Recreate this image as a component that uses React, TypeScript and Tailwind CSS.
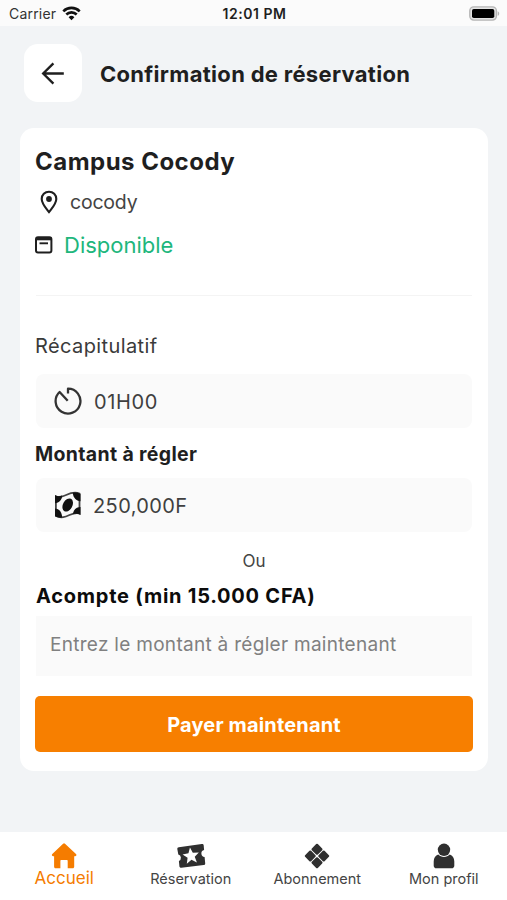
import type { ReactNode } from 'react'

function WifiIcon() {
  return (
    <svg width="19" height="15" viewBox="0 0 19 15" fill="none" stroke="#111" strokeWidth="2.6">
      <path d="M1.3 5.3a11.6 11.6 0 0 1 16.4 0" />
      <path d="M4.3 8.5a7.4 7.4 0 0 1 10.4 0" />
      <path d="M9.5 14.2 6.6 11.3a4.1 4.1 0 0 1 5.8 0Z" fill="#111" stroke="none" />
    </svg>
  )
}

function BatteryIcon() {
  return (
    <svg width="31" height="15" viewBox="0 0 31 15">
      <rect x="0.8" y="0.9" width="26.6" height="13.2" rx="4" fill="#e4e4e4" stroke="#b5b5b5" strokeWidth="1.4" />
      <rect x="3" y="3" width="22.3" height="9" rx="1.8" fill="#000" />
      <path d="M28.7 5.2c2 .8 2 3.8 0 4.6Z" fill="#b5b5b5" />
    </svg>
  )
}

function ArrowLeftIcon() {
  return (
    <svg width="24" height="24" viewBox="0 0 24 24" fill="none" stroke="#1f1f1f" strokeWidth="2.4">
      <path d="M22.8 12.5H2.4M12.4 2.3 2.2 12.5l10.2 10.2" />
    </svg>
  )
}

function PinIcon() {
  return (
    <svg width="18" height="24" viewBox="0 0 18 24">
      <path
        d="M9 1.7c4.2 0 7.3 3.1 7.3 7.2 0 4.7-4.4 9.4-7.3 13.2C6.1 18.3 1.7 13.6 1.7 8.9 1.7 4.8 4.8 1.7 9 1.7Z"
        fill="none"
        stroke="#1f1f1f"
        strokeWidth="2.1"
      />
      <circle cx="9" cy="9" r="2.9" fill="#1f1f1f" />
    </svg>
  )
}

function CalendarIcon() {
  return (
    <svg width="18" height="18" viewBox="0 0 18 18">
      <rect x="1" y="1.3" width="15.4" height="15.2" rx="2" fill="none" stroke="#1f1f1f" strokeWidth="2" />
      <path d="M1 2.7h15.4" stroke="#1f1f1f" strokeWidth="3.2" />
      <path d="M4.5 7.3H13" stroke="#1f1f1f" strokeWidth="1.9" />
    </svg>
  )
}

function TimerIcon() {
  return (
    <svg width="28" height="28" viewBox="0 0 28 28" fill="none" stroke="#333" strokeWidth="2.3">
      <path d="M14 6.6V1.7A12.4 12.4 0 1 1 5.6 5L13.7 13.8" strokeLinejoin="round" />
    </svg>
  )
}

function CashIcon() {
  return (
    <svg width="28" height="28" viewBox="0 0 28 28">
      <path
        d="M1.9 5.4c8 3.6 13-7 23.6-2.9v20C17.5 19.5 12 30 1.9 25Z"
        fill="#fafafa"
        stroke="#444"
        strokeWidth="1.8"
      />
      <path d="M1 4.2c2.5 1.4 5 1.2 7.3.1-.1 4.3-3.1 7.7-7.3 8Z" fill="#111" />
      <path d="M18.8 1.7c2.7-.4 5.3 0 7.7 1.2v7.3c-4.3-.2-7.4-3.5-7.7-8.5Z" fill="#111" />
      <path d="M1 17.5c4.2.2 7.1 3.7 7.1 9-2.6.4-5-.1-7.1-1.4Z" fill="#111" />
      <path d="M26.5 16v8c-2.3-1.4-5-1.5-7.5-.8.2-4.2 3.2-7.1 7.5-7.2Z" fill="#111" />
      <ellipse cx="13.7" cy="14" rx="4.7" ry="7" transform="rotate(28 13.7 14)" fill="#111" />
    </svg>
  )
}

function HomeIcon() {
  return (
    <svg width="26" height="26" viewBox="0 0 26 26" fill="#f57c00">
      <path d="M12.1.8a1.4 1.4 0 0 1 1.9 0L25 11.1c.8.8.4 2.1-.8 2.1h-1v10.6c0 .9-.6 1.5-1.5 1.5h-5V18c0-.6-.4-1-1-1h-5.3c-.6 0-1 .4-1 1v7.3H4.6c-.9 0-1.500-.6-1.500-1.500V13.200h-1c-1.200 0-1.600-1.300-.8-2.100Z" />
    </svg>
  )
}

function TicketIcon() {
  return (
    <svg width="30" height="26" viewBox="0 0 30 26">
      <path
        d="M2.8 4.2 25.8 1c1-.1 1.8.4 1.9 1.4l.4 4.7a3.5 3.5 0 0 0 .5 6.9l.6 6.2c.1 1-.5 1.8-1.5 1.9L5.3 24.700c-1 .1-1.800-.5-1.900-1.500L2.900 18a3.400 3.400 0 0 0-.6-6.400L1.300 6.100c-.1-1 .5-1.800 1.500-1.900Z"
        fill="#2f2f2f"
      />
      <path
        d="M15 4.4 17.2 10 23.2 10.4 18.6 14.3 20.1 20.1 15 16.9 9.9 20.1 11.4 14.3 6.8 10.4 12.8 10Z"
        transform="rotate(-7 15 13)"
        fill="#fff"
      />
    </svg>
  )
}

function DiamondsIcon() {
  return (
    <svg width="26" height="26" viewBox="0 0 26 26" fill="#2f2f2f">
      <g transform="rotate(45 13 13)">
        <rect x="4" y="4" width="8.5" height="8.5" rx="1.2" />
        <rect x="13.5" y="4" width="8.5" height="8.5" rx="1.2" />
        <rect x="4" y="13.5" width="8.5" height="8.5" rx="1.2" />
        <rect x="13.5" y="13.5" width="8.5" height="8.5" rx="1.2" />
      </g>
    </svg>
  )
}

function ProfileIcon() {
  return (
    <svg width="22" height="26" viewBox="0 0 22 26" fill="#2f2f2f">
      <path d="M5.2 11.6C2.5 12.4.7 15 .7 18.5v4.2c0 1.5 1.1 2.6 2.6 2.6h15.4c1.5 0 2.6-1.1 2.6-2.6v-4.2c0-3.5-1.8-6.1-4.5-6.9-3 3.3-8.6 3.3-11.6 0Z" />
      <circle cx="11" cy="6.8" r="6.2" />
    </svg>
  )
}

function InfoRow({ icon, children }: { icon: ReactNode; children: ReactNode }) {
  return (
    <div className="flex h-[54px] items-center rounded-lg bg-[#fafafa] pl-[18px]">
      {icon}
      {children}
    </div>
  )
}

function NavItem({ icon, children }: { icon: ReactNode; children: ReactNode }) {
  return (
    <a className="flex w-[126.5px] flex-col items-center whitespace-nowrap">
      {icon}
      {children}
    </a>
  )
}

export default function App() {
  return (
    <div className="flex h-[900px] w-[507px] flex-col overflow-hidden bg-[#f2f4f6] font-['Inter',sans-serif] text-[#1f1f1f]">
      <div className="flex h-[26px] shrink-0 items-center bg-[#fbfbfb] pr-[7px] pl-[9px]">
        <div className="flex flex-1 items-center gap-[6px]">
          <span className="pt-px text-[14px] leading-[26px] tracking-[0.2px] text-[#333]">Carrier</span>
          <WifiIcon />
        </div>
        <span className="pt-px text-[14px] leading-[26px] font-semibold tracking-[0.55px]">12:01 PM</span>
        <div className="flex flex-1 justify-end">
          <BatteryIcon />
        </div>
      </div>

      <header className="mt-[18px] flex h-[58px] shrink-0 items-center pl-6">
        <button className="flex h-[58px] w-[58px] items-center justify-center rounded-[14px] bg-white">
          <ArrowLeftIcon />
        </button>
        <h1 className="ml-[18px] pt-px text-[22px] leading-[30px] font-bold tracking-[0.3px] whitespace-nowrap">
          Confirmation de réservation
        </h1>
      </header>

      <main className="mx-5 mt-[26px] h-[643px] w-[468px] shrink-0 rounded-[14px] bg-white px-4 pt-[18px]">
        <h2 className="-ml-px text-[24px] leading-[32px] font-bold tracking-[0.48px]">Campus Cocody</h2>
        <div className="mt-[8px] flex h-8 items-center pl-1">
          <PinIcon />
          <span className="ml-3 pt-0.5 text-[19.5px] tracking-[-0.2px] text-[#444]">cocody</span>
        </div>
        <div className="mt-[11px] -ml-px flex h-8 items-center">
          <CalendarIcon />
          <span className="ml-[11px] text-[22px] text-[#20b67c]">Disponible</span>
        </div>
        <hr className="mt-[34px] border-t border-[#f4f4f4]" />

        <h3 className="-ml-px mt-[35px] text-[20px] leading-[30px] tracking-[0.4px] text-[#3a3a3a]">Récapitulatif</h3>
        <div className="mt-[13px]">
          <InfoRow icon={<TimerIcon />}>
            <span className="ml-3 pt-0.5 text-[20px] tracking-[0.6px] text-[#3f3f3f]">01H00</span>
          </InfoRow>
        </div>
        <h3 className="-ml-px mt-[11px] text-[19.5px] leading-[30px] font-bold tracking-[0.34px]">Montant à régler</h3>
        <div className="mt-[9px]">
          <InfoRow icon={<CashIcon />}>
            <span className="ml-[11px] pt-px text-[20px] tracking-[0.4px] text-[#3f3f3f]">250,000F</span>
          </InfoRow>
        </div>
        <p className="mt-[17px] text-center text-[17px] leading-[24px] text-[#444]">Ou</p>
        <label className="mt-[8px] block text-[20px] leading-[30px] font-bold tracking-[0.76px] text-[#0c0c0c]" htmlFor="deposit">
          Acompte (min 15.000 CFA)
        </label>
        <input
          id="deposit"
          className="mt-[5px] block h-[60px] w-full bg-[#fafafa] pr-2 pb-1 pl-[14px] text-[19px] tracking-[0.29px] placeholder:text-[#808080]"
          placeholder="Entrez le montant à régler maintenant"
        />
        <button className="mt-5 -ml-px block h-[56px] w-[438px] rounded-[5px] bg-[#f77f00] pt-[2px] text-[20px] font-bold tracking-[0.16px] text-white">
          Payer maintenant
        </button>
      </main>

      <nav className="mt-auto flex h-[68px] shrink-0 bg-white pt-[11px] pl-px">
        <NavItem icon={<HomeIcon />}>
          <span className="-mt-px text-[17px] leading-[20px] text-[#f57c00]">Accueil</span>
        </NavItem>
        <NavItem icon={<TicketIcon />}>
          <span className="text-[14.5px] leading-[20px] text-[#444]">Réservation</span>
        </NavItem>
        <NavItem icon={<DiamondsIcon />}>
          <span className="text-[14.5px] leading-[20px] text-[#444]">Abonnement</span>
        </NavItem>
        <NavItem icon={<ProfileIcon />}>
          <span className="text-[14.5px] leading-[20px] text-[#444]">Mon profil</span>
        </NavItem>
      </nav>
    </div>
  )
}
